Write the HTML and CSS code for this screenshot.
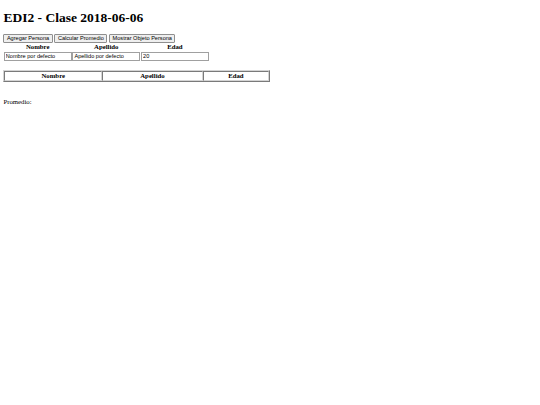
FILE: index.html
```html
<!DOCTYPE html>
<html lang="es">
<head>
<meta charset="utf-8">
<title>EDI2 - Clase 2018-06-06</title>
<link rel="stylesheet" href="styles.css">
</head>
<body>
<h1 class="title">EDI2 - Clase 2018-06-06</h1>
<div class="actions">
  <button class="btn" type="button">Agregar Persona</button>
  <button class="btn" type="button">Calcular Promedio</button>
  <button class="btn" type="button">Mostrar Objeto Persona</button>
</div>
<table class="form-table">
  <tr>
    <th>Nombre</th>
    <th>Apellido</th>
    <th>Edad</th>
  </tr>
  <tr>
    <td><input class="field" type="text" value="Nombre por defecto"></td>
    <td><input class="field" type="text" value="Apellido por defecto"></td>
    <td><input class="field" type="text" value="20"></td>
  </tr>
</table>
<table class="list-table">
  <tr>
    <th class="col-nombre">Nombre</th>
    <th class="col-apellido">Apellido</th>
    <th class="col-edad">Edad</th>
  </tr>
</table>
<p class="avg">Promedio:</p>
</body>
</html>
```
FILE: styles.css
```css
html, body {
  background: #fff;
}
body {
  margin: 3.4px;
  font-family: "Liberation Serif", "Times New Roman", serif;
  font-size: 6.75px;
  line-height: 7.76px;
  color: #000;
}
.title {
  font-size: 13.5px;
  font-weight: bold;
  margin: 6.5px 0 8.5px;
  line-height: 15.5px;
}
.actions {
  display: flex;
  gap: 1.7px;
  height: 8.9px;
}
.btn {
  font-family: "Liberation Sans", Arial, sans-serif;
  font-size: 5.6px;
  line-height: 6.3px;
  padding: 0 2.5px;
  margin: 0;
  height: 8.9px;
  background: #efefef;
  color: #000;
  border: 1px solid #8f8f8f;
  border-radius: 1px;
}
.form-table {
  border-collapse: separate;
  border-spacing: 0.84px;
}
.form-table th {
  font-weight: bold;
  padding: 0.42px;
  line-height: 7.76px;
}
.form-table td {
  padding: 0.42px;
}
.field {
  display: block;
  box-sizing: border-box;
  width: 67.8px;
  height: 8.9px;
  margin: 0;
  padding: 0 1px;
  font-family: "Liberation Sans", Arial, sans-serif;
  font-size: 5.6px;
  line-height: 6.3px;
  border: 1px solid #a0a0a0;
  background: #fff;
  color: #000;
}
.list-table {
  margin-top: 8.7px;
  width: 266.5px;
  border-collapse: separate;
  border-spacing: 0.84px;
  border: 1px solid;
  border-color: #d4d4d4 #7a7a7a #7a7a7a #d4d4d4;
}
.list-table th {
  font-weight: bold;
  padding: 0.42px;
  line-height: 7.76px;
  border: 1px solid;
  border-color: #7a7a7a #d4d4d4 #d4d4d4 #7a7a7a;
}
.col-nombre { width: 96px; }
.col-apellido { width: 99px; }
.col-edad { width: 64px; }
.avg {
  margin: 16px 0 0;
}
```
